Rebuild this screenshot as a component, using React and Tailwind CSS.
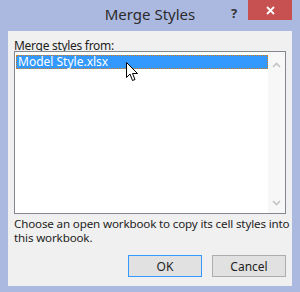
import React from 'react';

// Excel "Merge Styles" dialog
const font = { fontFamily: '"Noto Sans", "Open Sans", sans-serif' };

function Chevron({ up }) {
  return (
    <svg width="9" height="6" viewBox="0 0 9 6" className="block">
      <path d={up ? 'M1 5 L4.5 1.5 L8 5' : 'M1 1 L4.5 4.5 L8 1'} fill="none" stroke="#c2c2c2" strokeWidth="1.6" />
    </svg>
  );
}

function Cursor() {
  return (
    <svg width="13" height="20" viewBox="0 0 13 20" className="absolute left-[126px] top-[62px]">
      <path d="M0.5 0.5 L0.5 15.5 L4 12 L6.5 18.5 L9 17.5 L6.5 11.5 L11.5 11.5 Z" fill="#fff" stroke="#000" strokeWidth="1" strokeLinejoin="miter" />
    </svg>
  );
}

export default function App() {
  return (
    <div className="relative w-[300px] h-[292px] bg-[#abb9e1] flex flex-col text-[#1e1e1e]" style={font}>
      {/* title bar */}
      <div className="relative h-[31px] shrink-0 flex items-center justify-center">
        <span className="text-[15px] text-[#2b2b2b] -mt-[2px]">Merge Styles</span>
        <span className="absolute left-[231px] top-[4px] text-[13px] font-bold text-[#333]">?</span>
        <div className="absolute right-[8px] top-0 w-[44px] h-[20px] bg-[#c75050] flex items-center justify-center">
          <svg width="9" height="9" viewBox="0 0 9 9">
            <path d="M1 1 L8 8 M8 1 L1 8" stroke="#fff" strokeWidth="1.8" />
          </svg>
        </div>
      </div>

      {/* body */}
      <div className="flex-1 mx-[8px] mb-[6px] bg-[#f0f0f0] flex flex-col px-[6px] pt-[8px] text-[12px] leading-[13px]">
        <div className="h-[12px] leading-[13px] tracking-[-0.3px] overflow-visible">
          <span className="underline">M</span>erge styles from:
        </div>

        <div className="h-[163px] border border-[#828790] bg-white flex">
          <div className="flex-1 pt-[3px] pl-[1px]">
            <div className="h-[14px] bg-[#3399ff] border border-dotted border-[#d87a1e] text-white leading-[12px] pl-[1px]">
              Model Style.xlsx
            </div>
          </div>
          <div className="w-[17px] bg-[#f7f7f7] flex flex-col items-center justify-between pt-[10px] pb-[7px]">
            <Chevron up />
            <Chevron />
          </div>
        </div>

        <div className="mt-[3px] whitespace-nowrap text-[11.6px] leading-[14px] tracking-[-0.15px]">
          <div>Choose an open workbook to copy its cell styles into</div>
          <div>this workbook.</div>
        </div>

        <div className="mt-[10px] flex justify-end gap-[10px]">
          <button className="w-[74px] h-[22px] border border-[#3399ff] bg-[#e1e1e1] text-[12px]">OK</button>
          <button className="w-[74px] h-[22px] border border-[#adadad] bg-[#e1e1e1] text-[12px]">Cancel</button>
        </div>
      </div>

      <Cursor />
    </div>
  );
}
